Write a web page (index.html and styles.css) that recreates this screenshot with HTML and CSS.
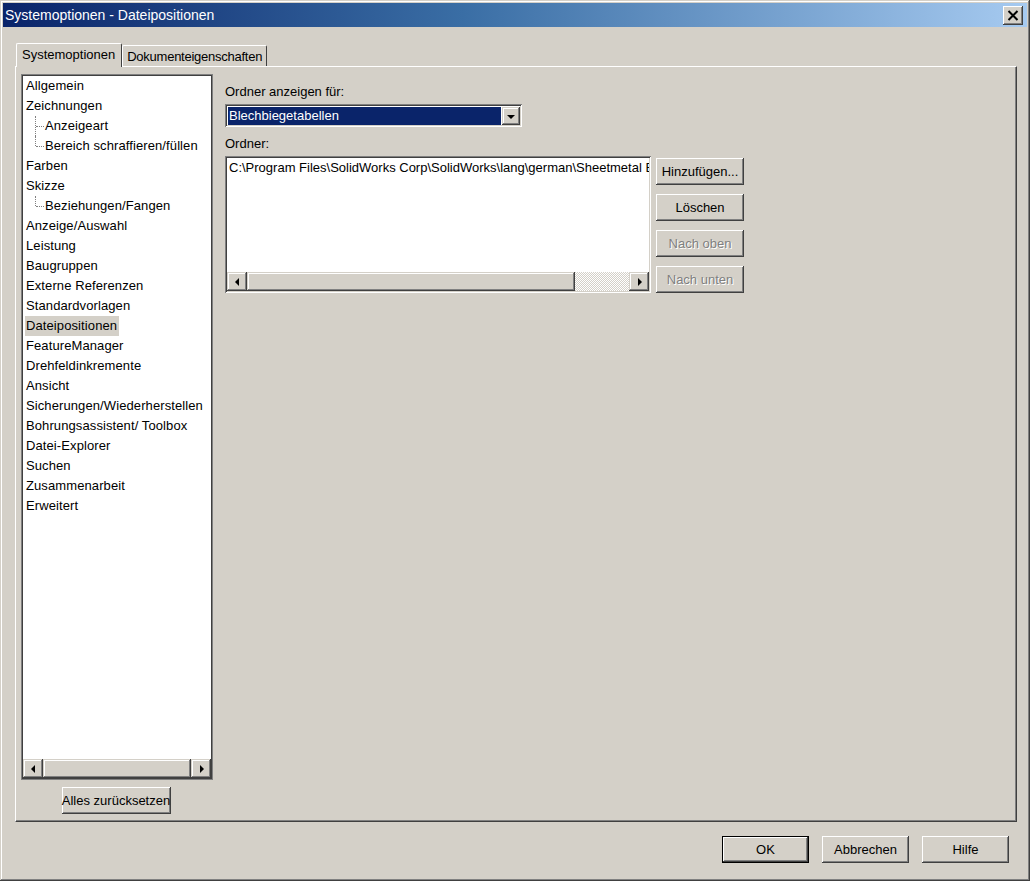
FILE: index.html
```html
<!DOCTYPE html>
<html lang="de">
<head>
    <meta charset="UTF-8">
    <title>Systemoptionen - Dateipositionen</title>
    <link rel="stylesheet" href="styles.css">
</head>
<body>
    <div class="window">
        <div class="titlebar">
            <span class="title">Systemoptionen - Dateipositionen</span>
            <div class="close">
                <svg width="12" height="11" viewBox="0 0 12 11">
                    <path d="M1.5 1 L10.5 10 M10.5 1 L1.5 10" stroke="#000" stroke-width="2" fill="none"/>
                </svg>
            </div>
        </div>

        <div class="tabs">
            <div class="tab active">Systemoptionen</div>
            <div class="tab">Dokumenteigenschaften</div>
        </div>

        <div class="panel">
            <div class="left">
                <div class="tree">
                    <ul class="tree-list">
                        <li>Allgemein</li>
                        <li>Zeichnungen</li>
                        <li class="child">Anzeigeart</li>
                        <li class="child last">Bereich schraffieren/füllen</li>
                        <li>Farben</li>
                        <li>Skizze</li>
                        <li class="child last">Beziehungen/Fangen</li>
                        <li>Anzeige/Auswahl</li>
                        <li>Leistung</li>
                        <li>Baugruppen</li>
                        <li>Externe Referenzen</li>
                        <li>Standardvorlagen</li>
                        <li><span class="selected">Dateipositionen</span></li>
                        <li>FeatureManager</li>
                        <li>Drehfeldinkremente</li>
                        <li>Ansicht</li>
                        <li>Sicherungen/Wiederherstellen</li>
                        <li>Bohrungsassistent/ Toolbox</li>
                        <li>Datei-Explorer</li>
                        <li>Suchen</li>
                        <li>Zusammenarbeit</li>
                        <li>Erweitert</li>
                    </ul>
                    <div class="hscroll">
                        <div class="sb-btn"><span class="arrow-left"></span></div>
                        <div class="sb-thumb full"></div>
                        <div class="sb-btn"><span class="arrow-right"></span></div>
                    </div>
                </div>
                <div class="reset-row">
                    <div class="btn reset">Alles zurücksetzen</div>
                </div>
            </div>

            <div class="right">
                <div class="label">Ordner anzeigen für:</div>
                <div class="combo">
                    <div class="combo-value">Blechbiegetabellen</div>
                    <div class="combo-btn"><span class="arrow-down"></span></div>
                </div>

                <div class="label second">Ordner:</div>
                <div class="folder-row">
                    <div class="listbox">
                        <div class="list-items">
                            <div class="list-item">C:\Program Files\SolidWorks Corp\SolidWorks\lang\german\Sheetmetal B</div>
                        </div>
                        <div class="hscroll">
                            <div class="sb-btn"><span class="arrow-left"></span></div>
                            <div class="sb-thumb list-thumb"></div>
                            <div class="sb-track"></div>
                            <div class="sb-btn"><span class="arrow-right"></span></div>
                        </div>
                    </div>
                    <div class="side-buttons">
                        <div class="btn side">Hinzufügen...</div>
                        <div class="btn side">Löschen</div>
                        <div class="btn side disabled">Nach oben</div>
                        <div class="btn side disabled">Nach unten</div>
                    </div>
                </div>
            </div>
        </div>

        <div class="footer">
            <div class="btn footer-btn default">OK</div>
            <div class="btn footer-btn">Abbrechen</div>
            <div class="btn footer-btn">Hilfe</div>
        </div>
    </div>
</body>
</html>
```

FILE: styles.css
```css
body {
    margin: 0;
    padding: 0;
    background-color: #d4d0c8;
    font-family: "Liberation Sans", Arial, sans-serif;
    font-size: 13px;
    color: #000;
}

.window {
    width: 1030px;
    height: 881px;
    box-sizing: border-box;
    padding: 3px;
    display: flex;
    flex-direction: column;
    background-color: #d4d0c8;
    box-shadow: inset -1px -1px #404040, inset 1px 1px #d4d0c8,
                inset -2px -2px #808080, inset 2px 2px #ffffff;
}

/* title bar */
.titlebar {
    height: 24px;
    display: flex;
    align-items: center;
    justify-content: space-between;
    padding: 0 4px 0 2px;
    background: linear-gradient(to right, #0a246a 0%, #3a6ea5 45%, #a6caf0 100%);
}

.title {
    color: #ffffff;
    font-size: 14px;
}

.close {
    width: 20px;
    height: 19px;
    box-sizing: border-box;
    display: flex;
    align-items: center;
    justify-content: center;
    background-color: #d4d0c8;
    box-shadow: inset -1px -1px #404040, inset 1px 1px #ffffff,
                inset -2px -2px #808080;
}

/* tabs */
.tabs {
    margin: 16px 0 0 13px;
    height: 23px;
    display: flex;
    align-items: flex-end;
    position: relative;
    z-index: 1;
}

.tab {
    height: 21px;
    line-height: 21px;
    padding: 0 4px;
    box-sizing: border-box;
    border-top: 1px solid #ffffff;
    border-left: 1px solid #ffffff;
    border-right: 1px solid #404040;
    border-radius: 2px 2px 0 0;
    font-size: 13px;
    letter-spacing: -0.25px;
}

.tab.active {
    height: 24px;
    line-height: 22px;
    margin-bottom: -1px;
    padding: 0 6px 0 5px;
    letter-spacing: 0;
    background-color: #d4d0c8;
}

/* main panel */
.panel {
    flex: 1;
    margin: 0 10px 0 12px;
    box-sizing: border-box;
    padding: 7px 6px 7px 5px;
    display: flex;
    border-top: 1px solid #ffffff;
    border-left: 1px solid #ffffff;
    border-right: 1px solid #404040;
    border-bottom: 1px solid #404040;
    box-shadow: inset -1px -1px #808080;
}

.left {
    width: 192px;
    display: flex;
    flex-direction: column;
}

.tree {
    flex: 1;
    display: flex;
    flex-direction: column;
    background-color: #ffffff;
    border: 1px solid #808080;
    box-shadow: inset 0 0 0 1px #404040;
    padding: 1px;
}

.tree-list {
    flex: 1;
    list-style: none;
    margin: 0;
    padding: 0;
}

.tree-list li {
    height: 20px;
    line-height: 20px;
    padding-left: 3px;
    white-space: nowrap;
    position: relative;
    letter-spacing: 0.1px;
}

.tree-list li.child {
    padding-left: 22px;
}

.tree-list li.child::before {
    content: "";
    position: absolute;
    left: 12px;
    top: 0;
    bottom: 0;
    border-left: 1px dotted #808080;
}

.tree-list li.child.last::before {
    bottom: 10px;
}

.tree-list li.child::after {
    content: "";
    position: absolute;
    left: 13px;
    top: 10px;
    width: 8px;
    border-top: 1px dotted #808080;
}

.selected {
    display: inline-block;
    background-color: #d4d0c8;
    padding: 0 2px 0 1px;
    margin-left: -1px;
}

/* scrollbars */
.hscroll {
    height: 19px;
    display: flex;
    background-color: #d4d0c8;
}

.sb-btn {
    width: 20px;
    height: 19px;
    box-sizing: border-box;
    display: flex;
    align-items: center;
    justify-content: center;
    background-color: #d4d0c8;
    box-shadow: inset -1px -1px #404040, inset 1px 1px #d4d0c8,
                inset -2px -2px #808080, inset 2px 2px #ffffff;
}

.sb-thumb {
    height: 19px;
    box-sizing: border-box;
    background-color: #d4d0c8;
    box-shadow: inset -1px -1px #404040, inset 1px 1px #d4d0c8,
                inset -2px -2px #808080, inset 2px 2px #ffffff;
}

.sb-thumb.full {
    flex: 1;
}

.list-thumb {
    width: 328px;
}

.sb-track {
    flex: 1;
    background: repeating-conic-gradient(#ffffff 0 25%, #d4d0c8 0 50%) 0 0 / 2px 2px;
}

.arrow-left {
    width: 0;
    height: 0;
    border-top: 4px solid transparent;
    border-bottom: 4px solid transparent;
    border-right: 4px solid #000;
    margin-right: 1px;
}

.arrow-right {
    width: 0;
    height: 0;
    border-top: 4px solid transparent;
    border-bottom: 4px solid transparent;
    border-left: 4px solid #000;
    margin-left: 1px;
}

.arrow-down {
    width: 0;
    height: 0;
    border-left: 4px solid transparent;
    border-right: 4px solid transparent;
    border-top: 4px solid #000;
    margin-top: 1px;
}

/* buttons */
.btn {
    height: 27px;
    box-sizing: border-box;
    display: flex;
    align-items: center;
    justify-content: center;
    background-color: #d4d0c8;
    box-shadow: inset -1px -1px #404040, inset 1px 1px #ffffff,
                inset -2px -2px #808080, inset 2px 2px #d4d0c8;
    white-space: nowrap;
}

.btn.disabled {
    color: #808080;
    text-shadow: 1px 1px #ffffff;
}

.reset-row {
    margin-top: 7px;
    display: flex;
    justify-content: center;
}

.reset {
    width: 109px;
    margin-right: 2px;
}

/* right side */
.right {
    margin-left: 12px;
    padding-top: 10px;
}

.label {
    line-height: 16px;
}

.label.second {
    margin-top: 9px;
}

.combo {
    margin-top: 4px;
    width: 297px;
    height: 23px;
    box-sizing: border-box;
    padding: 3px 2px 2px 3px;
    display: flex;
    background-color: #ffffff;
    box-shadow: inset 1px 1px #808080, inset -1px -1px #ffffff,
                inset 2px 2px #404040, inset -2px -2px #d4d0c8;
}

.combo-value {
    flex: 1;
    margin-right: 1px;
    background-color: #0a246a;
    color: #ffffff;
    line-height: 18px;
    padding-left: 1px;
}

.combo-btn {
    width: 18px;
    box-sizing: border-box;
    display: flex;
    align-items: center;
    justify-content: center;
    background-color: #d4d0c8;
    box-shadow: inset -1px -1px #404040, inset 1px 1px #d4d0c8,
                inset -2px -2px #808080, inset 2px 2px #ffffff;
}

.folder-row {
    margin-top: 4px;
    display: flex;
    align-items: flex-start;
}

.listbox {
    width: 426px;
    height: 137px;
    box-sizing: border-box;
    padding: 2px;
    display: flex;
    flex-direction: column;
    background-color: #ffffff;
    box-shadow: inset 1px 1px #808080, inset -1px -1px #ffffff,
                inset 2px 2px #404040, inset -2px -2px #d4d0c8;
}

.list-items {
    flex: 1;
    overflow: hidden;
}

.list-item {
    width: 420px;
    overflow: hidden;
    line-height: 20px;
    padding-left: 2px;
    white-space: nowrap;
}

.side-buttons {
    margin: 2px 0 0 5px;
    display: flex;
    flex-direction: column;
    gap: 9px;
}

.side {
    width: 88px;
}

/* footer */
.footer {
    display: flex;
    justify-content: flex-end;
    gap: 13px;
    padding: 14px 18px 15px 0;
}

.footer-btn {
    width: 87px;
}

.footer-btn.default {
    border: 1px solid #000;
}
```
